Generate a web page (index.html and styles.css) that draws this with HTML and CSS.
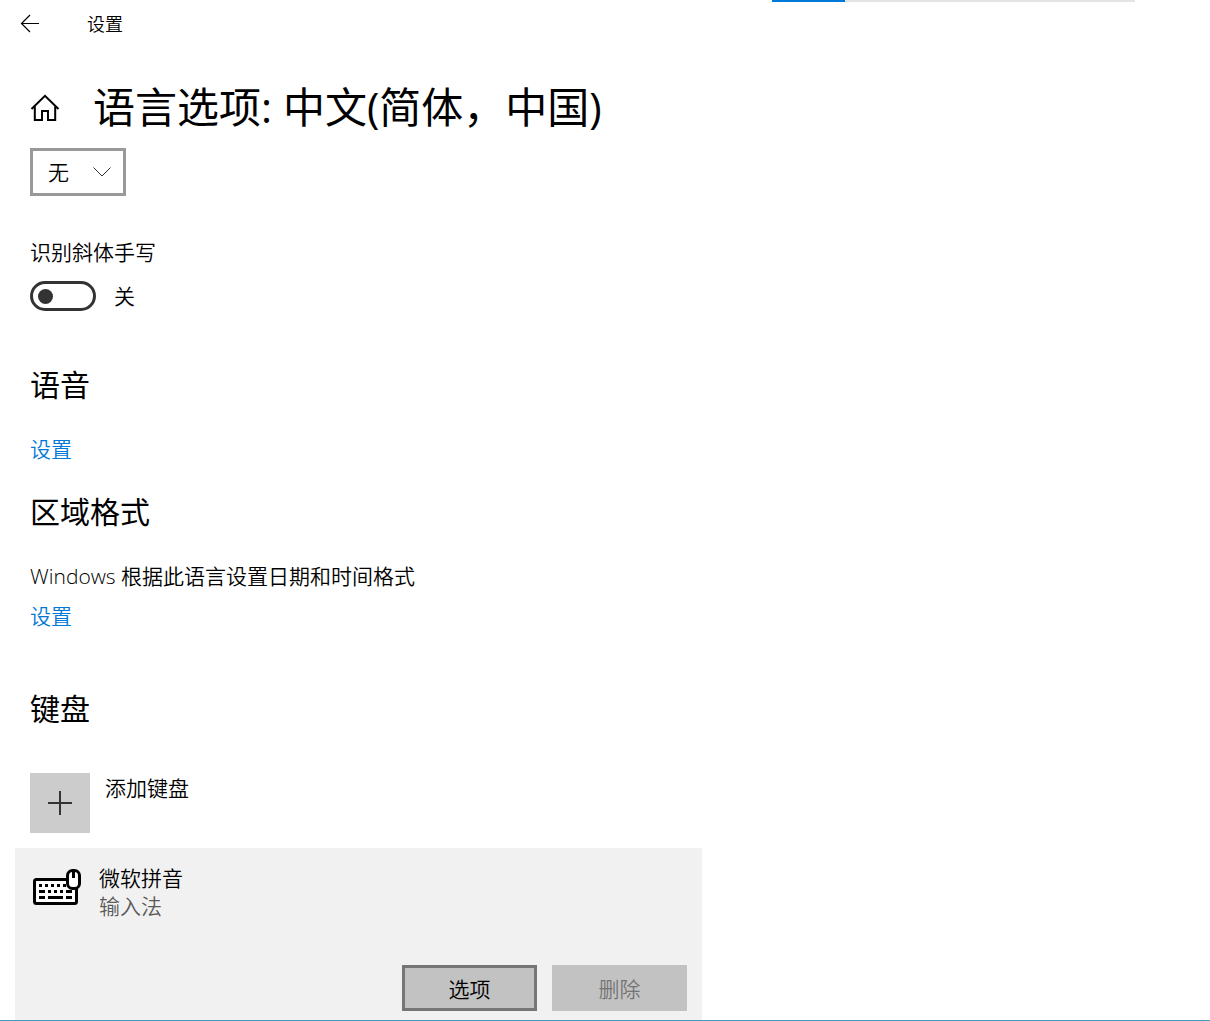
FILE: index.html
```
<!DOCTYPE html>
<html lang="zh-CN">
<head>
  <meta charset="UTF-8">
  <meta name="viewport" content="width=device-width, initial-scale=1">
  <title>设置</title>
  <link rel="stylesheet" href="styles.css">
</head>
<body>
  <header class="titlebar">
    <button type="button" class="back" aria-label="返回">
      <svg width="20" height="20" viewBox="0 0 20 20" fill="none" stroke="#000" stroke-width="1.2">
        <path d="M19 9.5H1.5M10 1L1.5 9.5L10 18" />
      </svg>
    </button>
    <span class="app-name">设置</span>
    <div class="progress"><div class="progress-fill"></div></div>
  </header>

  <main class="content">
    <div class="page-head">
      <a href="#" class="home" aria-label="主页">
        <svg width="30" height="30" viewBox="0 0 30 30" fill="none" stroke="#000" stroke-width="2">
          <path d="M1.5 17L15 3.8L28.5 17M4.8 14.5V28H12V19H18V28H25.2V14.5" />
        </svg>
      </a>
      <h1>语言选项: 中文(简体，中国)</h1>
    </div>

    <div class="select-box">
      <select aria-label="手写">
        <option>无</option>
      </select>
      <svg class="chevron" width="18" height="10" viewBox="0 0 18 10" fill="none" stroke="#333" stroke-width="1">
        <path d="M0.5 0.5L9 9L17.5 0.5" />
      </svg>
    </div>

    <div class="toggle-field">
      <label for="cursive">识别斜体手写</label>
      <div class="toggle-row">
        <input type="checkbox" id="cursive" class="toggle">
        <span>关</span>
      </div>
    </div>

    <section class="speech">
      <h2>语音</h2>
      <a href="#" class="link">设置</a>
    </section>

    <section class="region">
      <h2>区域格式</h2>
      <p>Windows 根据此语言设置日期和时间格式</p>
      <a href="#" class="link">设置</a>
    </section>

    <section class="keyboards">
      <h2>键盘</h2>
      <button type="button" class="add">
        <span class="add-icon">
          <svg width="24" height="24" viewBox="0 0 24 24" stroke="#333" stroke-width="2">
            <path d="M12 0V24M0 12H24" />
          </svg>
        </span>
        <span class="add-text">添加键盘</span>
      </button>

      <div class="card">
        <div class="ime">
          <svg width="50" height="40" viewBox="0 0 50 40" fill="none">
            <rect x="2.5" y="11.5" width="42" height="24" rx="2" fill="#fff" stroke="#000" stroke-width="3" />
            <path d="M7 17.5H37" stroke="#000" stroke-width="3" stroke-dasharray="3 3" />
            <path d="M7 23.5H13M16 23.5H19M22 23.5H25M28 23.5H31M34 23.5H40" stroke="#000" stroke-width="3" />
            <path d="M7 29.5H13M16 29.5H31M34 29.5H40" stroke="#000" stroke-width="3" />
            <rect x="35.5" y="2.5" width="12" height="18" rx="5" fill="#fff" stroke="#000" stroke-width="3" />
            <path d="M41.5 3V10" stroke="#000" stroke-width="3" />
          </svg>
          <div>
            <div>微软拼音</div>
            <div class="ime-type">输入法</div>
          </div>
        </div>
        <div class="actions">
          <button type="button" class="btn focused">选项</button>
          <button type="button" class="btn" disabled>删除</button>
        </div>
      </div>
    </section>
  </main>
  <div class="desktop-edge"></div>
</body>
</html>
```
FILE: styles.css
```
* {
  box-sizing: border-box;
}

body {
  display: flex;
  flex-direction: column;
  min-height: 100vh;
  margin: 0;
  background: #fff;
  color: #000;
  font-family: "Open Sans", "Noto Sans CJK SC", sans-serif;
  font-size: 21px;
  font-weight: 350;
  line-height: 28px;
}

h1, h2, p {
  margin: 0;
}

h1, h2 {
  font-weight: 400;
}

button, select {
  font: inherit;
  color: inherit;
}

svg {
  display: block;
}

.titlebar {
  display: flex;
  align-items: center;
  height: 48px;
}

.back {
  padding: 0 20px;
  border: none;
  background: none;
}

.app-name {
  margin-left: 27px;
  font-size: 18px;
}

.progress {
  align-self: flex-start;
  width: 30%;
  height: 2px;
  margin-left: auto;
  margin-right: 75px;
  background: #e4e4e4;
}

.progress-fill {
  width: 20%;
  height: 2px;
  background: #0078d7;
}

.content {
  flex: 1;
  display: flex;
  flex-direction: column;
  padding: 29px 30px 0;
}

.page-head {
  display: flex;
  align-items: center;
  gap: 33px;
}

h1 {
  font-size: 42px;
  line-height: 60px;
}

h2 {
  font-size: 30px;
  line-height: 40px;
}

.select-box {
  position: relative;
  width: 96px;
  margin-top: 11px;
}

select {
  display: block;
  width: 100%;
  height: 48px;
  padding: 0 15px;
  border: 3px solid #999;
  border-radius: 0;
  background: #fff;
  appearance: none;
}

.chevron {
  position: absolute;
  top: 19px;
  right: 15px;
  pointer-events: none;
}

.toggle-field {
  margin-top: 42px;
}

.toggle-row {
  display: flex;
  align-items: center;
  gap: 18px;
  margin-top: 15px;
}

.toggle {
  display: flex;
  align-items: center;
  width: 66px;
  height: 30px;
  margin: 0;
  padding: 0 5px;
  border: 3px solid #333;
  border-radius: 15px;
  appearance: none;
}

.toggle::before {
  content: "";
  width: 15px;
  height: 15px;
  border-radius: 50%;
  background: #333;
}

.toggle:checked {
  justify-content: flex-end;
}

.speech {
  margin-top: 54px;
}

.region {
  margin-top: 29px;
}

.keyboards {
  flex: 1;
  display: flex;
  flex-direction: column;
  margin-top: 59px;
}

.link {
  display: block;
  width: fit-content;
  margin-top: 30px;
  color: #0078d7;
  text-decoration: none;
}

.region p {
  margin-top: 30px;
}

.region .link {
  margin-top: 12px;
}

.add {
  display: flex;
  align-items: flex-start;
  gap: 15px;
  width: fit-content;
  margin-top: 44px;
  padding: 0;
  border: none;
  background: none;
}

.add-icon {
  display: grid;
  place-items: center;
  width: 60px;
  height: 60px;
  background: #ccc;
}

.add-text {
  padding-top: 1px;
}

.card {
  flex: 1;
  display: flex;
  flex-direction: column;
  width: 100%;
  max-width: 687px;
  margin: 15px 0 0 -15px;
  padding: 16px 15px 9px;
  background: #f1f1f1;
}

.ime {
  display: flex;
  align-items: flex-start;
  gap: 17px;
  padding-left: 2px;
}

.ime svg {
  margin-top: 4px;
}

.ime-type {
  color: #5a5a5a;
}

.actions {
  display: flex;
  justify-content: flex-end;
  gap: 15px;
  margin-top: 45px;
}

.btn {
  width: 135px;
  height: 46px;
  padding: 2px 0 0;
  border: none;
  background: #c2c2c2;
}

.btn.focused {
  border: 3px solid #767676;
}

.btn:disabled {
  color: #737373;
}

.desktop-edge {
  height: 1px;
  background: #4a9aba;
}
```
